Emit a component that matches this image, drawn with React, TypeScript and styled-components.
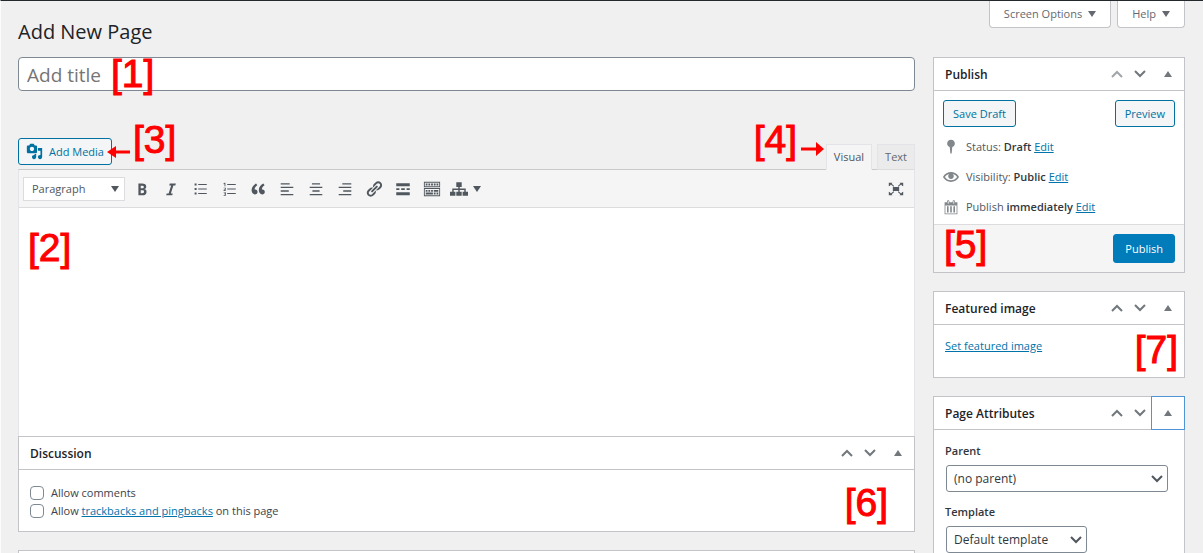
import React from "react";
import styled, { createGlobalStyle, css } from "styled-components";

const Global = createGlobalStyle`
  *, *::before, *::after { box-sizing: border-box; }
  html { height: 100%; overflow: hidden; }
  body {
    margin: 0;
    background: #f0f0f0;
    color: #3c434a;
    font-family: "Open Sans", "Noto Sans", sans-serif;
    font-size: 11px;
    line-height: 18px;
  }
  button, input, select, textarea { font: inherit; color: inherit; margin: 0; }
  a { color: #0073aa; }
`;

const Page = styled.main`
  display: flex;
  gap: 18px;
  min-height: 100vh;
  padding: 0 18px 0 17px;
  border-top: 1px solid #23282d;
  border-left: 1px solid #fcfcfc;
`;
const MainColumn = styled.div`
  flex: 1;
  min-width: 0;
  display: flex;
  flex-direction: column;
`;
const SideColumn = styled.aside`
  width: 252px;
  flex: none;
  display: flex;
  flex-direction: column;
  gap: 18px;
`;
const Heading = styled.h1`
  margin: 0;
  height: 56px;
  padding-top: 17px;
  font-size: 20px;
  line-height: 28px;
  font-weight: 400;
  color: #1d2327;
`;
const TitleWrap = styled.div`
  position: relative;
  display: flex;
`;
const TitleInput = styled.input`
  width: 100%;
  height: 34px;
  padding: 2px 8px 0;
  font-size: 19px;
  border: 1px solid #7e8993;
  border-radius: 4px;
  background: #fff;
  &::placeholder { color: #757575; opacity: 1; }
`;

const Mark = styled.span<{ $x: number; $y: number; $right?: boolean }>`
  position: absolute;
  top: ${(p) => p.$y}px;
  ${(p) => (p.$right ? css`right: ${p.$x}px;` : css`left: ${p.$x}px;`)}
  font-family: "Liberation Sans", Arial, sans-serif;
  font-size: 39px;
  line-height: 40px;
  color: #f00;
  -webkit-text-stroke: 1px #f00;
  white-space: nowrap;
  pointer-events: none;
`;
const Arrow = styled.svg<{ $x: number; $y: number; $right?: boolean }>`
  position: absolute;
  z-index: 2;
  top: ${(p) => p.$y}px;
  ${(p) => (p.$right ? css`right: ${p.$x}px;` : css`left: ${p.$x}px;`)}
  fill: #f00;
  pointer-events: none;
`;

const EditorHead = styled.div`
  position: relative;
  display: flex;
  justify-content: space-between;
  align-items: flex-end;
  margin-top: 47px;
  height: 31px;
`;
const Button = styled.button<{ $primary?: boolean }>`
  display: inline-flex;
  align-items: center;
  justify-content: center;
  height: ${(p) => (p.$primary ? 29 : 27)}px;
  padding: 0 ${(p) => (p.$primary ? 11 : 9)}px;
  border: 1px solid ${(p) => (p.$primary ? "#007cba" : "#0071a1")};
  border-radius: 3px;
  background: ${(p) => (p.$primary ? "#007cba" : "#f3f5f6")};
  color: ${(p) => (p.$primary ? "#fff" : "#0071a1")};
  white-space: nowrap;
`;
const MediaButton = styled(Button)`
  align-self: flex-start;
  gap: 6px;
  padding: 0 7px;
`;
const Tabs = styled.div`
  display: flex;
  gap: 5px;
  position: relative;
  z-index: 1;
`;
const Tab = styled.button<{ $active?: boolean }>`
  height: 26px;
  padding: 0 7px;
  border: 1px solid #e2e4e7;
  border-bottom-color: ${(p) => (p.$active ? "#f5f5f5" : "#dcdcde")};
  background: ${(p) => (p.$active ? "#f5f5f5" : "#ebebeb")};
  color: ${(p) => (p.$active ? "#50575e" : "#646970")};
  margin-bottom: -1px;
`;
const Editor = styled.section`
  position: relative;
  border: 1px solid #e2e4e7;
  border-top-color: #c8cacc;
  border-bottom: 0;
  background: #fff;
`;
const Toolbar = styled.div`
  display: flex;
  align-items: center;
  height: 38px;
  padding: 0 4px;
  background: #f5f5f5;
  border-bottom: 1px solid #dcdcde;
`;
const FormatButton = styled.button`
  display: flex;
  align-items: center;
  justify-content: space-between;
  width: 102px;
  height: 24px;
  margin-right: 2px;
  padding: 0 5px 0 8px;
  border: 1px solid #dcdcde;
  background: #fff;
  color: #50575e;
`;
const ToolButton = styled.button<{ $wide?: boolean; $end?: boolean }>`
  display: flex;
  align-items: center;
  justify-content: center;
  gap: 5px;
  width: ${(p) => (p.$wide ? 38 : 29)}px;
  height: 28px;
  padding: 0;
  border: 0;
  background: none;
  color: #50575e;
  margin-left: ${(p) => (p.$end ? "auto" : "0")};
`;
const Content = styled.textarea`
  display: block;
  width: 100%;
  height: 228px;
  padding: 8px;
  border: 0;
  resize: none;
  background: #fff;
`;

const Box = styled.section`
  position: relative;
  background: #fff;
  border: 1px solid #c3c4c7;
`;
const BoxHead = styled.header`
  display: flex;
  align-items: center;
  height: 33px;
  padding-left: 11px;
  border-bottom: 1px solid #c3c4c7;
`;
const BoxTitle = styled.h2`
  flex: 1;
  margin: 0;
  padding-top: 2px;
  font-size: 12px;
  font-weight: 600;
  color: #1d2327;
`;
const HeadButton = styled.button<{ $toggle?: boolean; $focus?: boolean; $dim?: boolean }>`
  display: flex;
  align-items: center;
  justify-content: center;
  width: ${(p) => (p.$toggle ? 34 : 23)}px;
  height: 34px;
  margin-right: ${(p) => (p.$toggle ? -1 : 0)}px;
  padding: 0;
  border: 1px solid ${(p) => (p.$focus ? "#4f94d4" : "transparent")};
  background: none;
  color: ${(p) => (p.$dim ? "#a0a5aa" : "#72777c")};
`;

const ScreenTabs = styled.div`
  display: flex;
  justify-content: flex-end;
  gap: 6px;
  height: 38px;
`;
const ScreenTab = styled.button`
  display: flex;
  flex: none;
  align-items: center;
  gap: 6px;
  height: 27px;
  padding: 0 14px;
  border: 1px solid #c3c4c7;
  border-top: 0;
  border-radius: 0 0 4px 4px;
  background: #fff;
  color: #646970;
  white-space: nowrap;
`;

const Actions = styled.div`
  display: flex;
  justify-content: space-between;
  padding: 9px;
`;
const InfoList = styled.ul`
  list-style: none;
  margin: 0;
  padding: 2px 9px 8px;
  display: flex;
  flex-direction: column;
  gap: 12px;
`;
const InfoRow = styled.li`
  display: flex;
  align-items: center;
  gap: 7px;
  color: #50575e;
  height: 18px;
  svg { color: #82878c; flex: none; }
  b { font-weight: 600; color: #32373c; }
`;
const Footer = styled.footer`
  display: flex;
  justify-content: flex-end;
  padding: 9px;
  background: #f5f5f5;
  border-top: 1px solid #dcdcde;
`;
const FeatureBody = styled.div`
  padding: 12px 11px 22px;
`;
const Fields = styled.div`
  display: flex;
  flex-direction: column;
  align-items: flex-start;
  padding: 12px 11px;
`;
const Label = styled.label`
  color: #32373c;
  font-weight: 600;
`;
const SelectWrap = styled.div<{ $w: string }>`
  position: relative;
  width: ${(p) => p.$w};
  margin: 5px 0 11px 1px;
  svg { position: absolute; right: 5px; top: 9px; color: #50575e; pointer-events: none; }
`;
const Select = styled.select`
  appearance: none;
  width: 100%;
  height: 27px;
  padding: 1px 24px 0 7px;
  border: 1px solid #7e8993;
  border-radius: 3px;
  background: #fff;
  color: #32373c;
  font-size: 12px;
`;
const Checks = styled.div`
  display: flex;
  flex-direction: column;
  padding: 14px 11px 11px;
`;
const CheckLabel = styled.label`
  display: flex;
  align-items: center;
  gap: 7px;
  height: 18px;
`;
const Check = styled.input`
  appearance: none;
  width: 14px;
  height: 14px;
  border: 1px solid #7e8993;
  border-radius: 4px;
  background: #fff;
`;
const NextBox = styled(Box)`
  margin-top: 18px;
  height: 40px;
`;

const Icon = ({ d, size = 18 }: { d: string; size?: number }) => (
  <svg width={size} height={size} viewBox="0 0 20 20" fill="currentColor" aria-hidden="true">
    <path d={d} />
  </svg>
);
const Caret = ({ up }: { up?: boolean }) => (
  <svg width={8} height={6} viewBox="0 0 8 6" fill="currentColor" aria-hidden="true">
    <path d={up ? "M0 6h8L4 0z" : "M0 0h8L4 6z"} />
  </svg>
);
const Chevron = ({ up }: { up?: boolean }) => (
  <svg width="12" height="10" viewBox="0 0 12 10" fill="none" stroke="currentColor" strokeWidth="2" aria-hidden="true">
    <path d={up ? "M1 8l5-5 5 5" : "M1 2l5 5 5-5"} />
  </svg>
);

const tools: [string, string][] = [
  ["Bold", "M6 4v13h4.54c1.37 0 2.46-.33 3.26-1 .8-.66 1.2-1.58 1.2-2.77 0-.84-.17-1.51-.51-2.01s-.9-.85-1.67-1.03v-.09c.57-.1 1.02-.4 1.36-.9s.51-1.13.51-1.91c0-1.14-.39-1.98-1.17-2.5C12.75 4.26 11.5 4 9.78 4H6zm2.57 5.15V6.26h1.36c.73 0 1.27.11 1.61.32.34.22.51.58.51 1.07 0 .54-.16.92-.47 1.15s-.82.35-1.51.35h-1.5zm0 2.19h1.6c1.44 0 2.16.53 2.16 1.61 0 .6-.17 1.05-.51 1.34s-.86.43-1.57.43H8.57v-3.38z"],
  ["Italic", "M14.78 6h-2.130l-2.800 9h2.120l-.620 2H4.600l.620-2h2.140l2.800-9H8.030l.620-2h6.750z"],
  ["Bulleted list", "M4 4h2.200v2.200H4zM4 9h2.200v2.200H4zM4 14h2.200v2.200H4zM8 4.500h9.500v1.100H8zM8 9.500h9.500v1.100H8zM8 14.500h9.500v1.100H8z"],
  ["Numbered list", "M8 4.500h9.500v1.100H8zM8 9.500h9.500v1.100H8zM8 14.500h9.500v1.100H8zM4 3.600L5.200 3H6v4H5V4.300l-1 .4zM4 8.500h2.500v2L5 11.400h1.500v.8H4v-1.200l1.600-1.100v-.600H4zM4 13.500h2.500v4H4v-.8h1.600v-.9H4.500v-.7h1.100v-.8H4z"],
  ["Blockquote", "M9.49 13.22c0-.74-.2-1.38-.61-1.9-.62-.78-1.83-.88-2.53-.72-.29-1.65 1.11-3.75 2.92-4.65L7.88 4c-2.73 1.3-5.42 4.28-4.96 8.05C3.21 14.43 4.59 16 6.54 16c.85 0 1.56-.25 2.12-.75s.83-1.18.83-2.03zm8.05 0c0-.74-.2-1.38-.61-1.9-.63-.78-1.83-.88-2.53-.72-.29-1.65 1.11-3.75 2.92-4.65L15.93 4c-2.73 1.3-5.41 4.28-4.95 8.05.29 2.38 1.66 3.95 3.61 3.95.85 0 1.56-.25 2.12-.75s.83-1.18.83-2.03z"],
  ["Align left", "M3 3.500h10V5H3zM3 7.500h14V9H3zM3 11.500h9V13H3zM3 15.500h14V17H3z"],
  ["Align center", "M5.500 3.500h9V5h-9zM3 7.500h14V9H3zM6 11.500h8V13H6zM3 15.500h14V17H3z"],
  ["Align right", "M7 3.500h10V5H7zM3 7.500h14V9H3zM8 11.500h9V13H8zM3 15.500h14V17H3z"],
  ["Insert link", "M17.74 2.76c1.68 1.69 1.68 4.41 0 6.1l-1.53 1.52c-1.12 1.12-2.7 1.47-4.14 1.09l2.62-2.61.76-.77.76-.76c.84-.84.84-2.2 0-3.04-.84-.85-2.2-.85-3.04 0l-.77.76-3.38 3.38c-.37-1.44-.02-3.02 1.1-4.14l1.52-1.53c1.69-1.68 4.42-1.68 6.1 0zM8.59 13.43l5.34-5.34c.42-.42.42-1.1 0-1.52-.44-.43-1.13-.39-1.53 0l-5.33 5.34c-.42.42-.42 1.1 0 1.52.44.43 1.13.39 1.52 0zm-.76 2.29l4.14-4.15c.38 1.44.03 3.02-1.09 4.14l-1.52 1.53c-1.69 1.68-4.41 1.68-6.1 0-1.68-1.68-1.68-4.42 0-6.1l1.53-1.52c1.12-1.12 2.7-1.47 4.14-1.1l-4.14 4.15c-.85.84-.85 2.2 0 3.05.84.84 2.2.84 3.04 0z"],
  ["Read more", "M17.500 7V3.500H2.500V7h15zM6 11V9.300H2.500V11H6zm6 0V9.300H8V11h4zm5.500 0V9.300H14V11h3.500zm0 6v-3.500H2.500V17h15z"],
  ["Toolbar toggle", "M19 2v6H1V2h18zm-1 5V3H2v4h16zM5 4v2H3V4h2zm3 0v2H6V4h2zm3 0v2H9V4h2zm3 0v2h-2V4h2zm3 0v2h-2V4h2zm2 5v9H1V9h18zm-1 8v-7H2v7h16zM5 11v2H3v-2h2zm3 0v2H6v-2h2zm3 0v2H9v-2h2zm6 0v2h-5v-2h5zm-6 3v2H3v-2h8zm3 0v2h-2v-2h2zm3 0v2h-2v-2h2z"],
];
const sitemap = "M7 2.500h6v5.300h-2.200v1.700H17.500V13H20v4.500h-6V13h1.900v-1.900h-5.100V13H13v4.500H7V13h2.200v-1.900H4.100V13H6v4.500H0V13h2.500V9.500h6.700V7.800H7z";
const fullscreen = "M2 3h4L5.200 4.100 8 6.600 7.300 7.400 4.300 5 3.200 6.500 2 7zM18 3h-4l.8 1.100L12 6.600l.7.800 3-2.400 1.100 1.500L18 7zM2 17h4l-.8-1.100L8 13.400l-.7-.8-3 2.400-1.100-1.500L2 13zM18 17h-4l.8-1.100-2.800-2.500.7-.8 3 2.400 1.100-1.500L18 13zM6.500 7.800h7v4.500h-7z";
const media = "M13 11V4c0-.55-.45-1-1-1h-1.670L9 1H5L3.670 3H2c-.55 0-1 .45-1 1v7c0 .55.45 1 1 1h10c.55 0 1-.45 1-1zM7 4.500c1.380 0 2.500 1.120 2.500 2.500S8.380 9.500 7 9.500 4.500 8.380 4.500 7 5.620 4.500 7 4.500zM14 6h5v10.500c0 1.380-1.120 2.500-2.500 2.500S14 17.880 14 16.500s1.120-2.500 2.500-2.500c.17 0 .34.02.5.050V9h-3V6zm-4 8.050V13h2v3.500c0 1.380-1.120 2.500-2.500 2.500S7 17.880 7 16.500 8.120 14 9.500 14c.17 0 .34.02.5.050z";
const pin = "M10 1c2.700 0 4.800 2 4.800 4.600 0 2-1.300 3.700-3.200 4.300L10.800 18H9.200l-.8-8.100C6.500 9.300 5.200 7.600 5.200 5.600 5.200 3 7.300 1 10 1z";
const eye = "M19.700 9.400C17.700 6 14 3.900 10 3.900S2.300 6 .3 9.400L0 10l.3.600c2 3.400 5.700 5.500 9.700 5.500s7.700-2.100 9.700-5.500l.3-.6-.3-.6zM10 14.100c-3.100 0-6-1.600-7.700-4.100C3.600 8 5.700 6.600 8 6.100c-.9.600-1.500 1.700-1.500 2.900 0 1.900 1.600 3.500 3.500 3.500s3.500-1.600 3.500-3.500c0-1.200-.6-2.300-1.500-2.900 2.300.5 4.400 1.900 5.700 3.900-1.700 2.500-4.600 4.100-7.700 4.100z";
const calendar = "M15 4h3v15H2V4h3V3c0-.83.67-1.500 1.500-1.500S8 2.170 8 3v1h4V3c0-.83.67-1.500 1.500-1.500S15 2.170 15 3v1zM6 3v2.500c0 .28.22.5.5.5s.5-.22.5-.5V3c0-.28-.22-.5-.5-.5S6 2.720 6 3zm7 0v2.500c0 .28.22.5.5.5s.5-.22.5-.5V3c0-.28-.22-.5-.5-.5s-.5.220-.5.500zm4 15V8H3v10h14zM5 9h2v8H5zM9 9h2v8H9zM13 9h2v8h-2z";

const Head = ({ title, firstDim, focus }: { title: string; firstDim?: boolean; focus?: boolean }) => (
  <BoxHead>
    <BoxTitle>{title}</BoxTitle>
    <HeadButton $dim={firstDim} aria-label={`Move ${title} up`}><Chevron up /></HeadButton>
    <HeadButton aria-label={`Move ${title} down`}><Chevron /></HeadButton>
    <HeadButton $toggle $focus={focus} aria-label={`Toggle ${title}`}><Caret up /></HeadButton>
  </BoxHead>
);

export default function App() {
  return (
    <>
      <Global />
      <Page>
        <MainColumn>
          <Heading>Add New Page</Heading>
          <TitleWrap>
            <TitleInput placeholder="Add title" aria-label="Add title" />
            <Mark $x={93} $y={-3}>[1]</Mark>
          </TitleWrap>
          <EditorHead>
            <MediaButton><Icon d={media} size={17} />Add Media</MediaButton>
            <Arrow $x={89} $y={8} width="23" height="12" viewBox="0 0 23 12"><path d="M0 6l9-6v4.500h14v3H9V12z" /></Arrow>
            <Mark $x={115} $y={-18}>[3]</Mark>
            <Mark $right $x={118} $y={-18}>[4]</Mark>
            <Arrow $right $x={91} $y={4} width="23" height="14" viewBox="0 0 23 14"><path d="M23 7l-8-7v5.500H0v3h15V14z" /></Arrow>
            <Tabs>
              <Tab $active>Visual</Tab>
              <Tab>Text</Tab>
            </Tabs>
          </EditorHead>
          <Editor>
            <Toolbar>
              <FormatButton>Paragraph <Caret /></FormatButton>
              {tools.map(([name, d]) => (
                <ToolButton key={name} aria-label={name}><Icon d={d} /></ToolButton>
              ))}
              <ToolButton $wide aria-label="Page layout"><Icon d={sitemap} /><Caret /></ToolButton>
              <ToolButton $end aria-label="Fullscreen"><Icon d={fullscreen} /></ToolButton>
            </Toolbar>
            <Content aria-label="Page content" />
            <Mark $x={9} $y={58}>[2]</Mark>
          </Editor>
          <Box>
            <Head title="Discussion" />
            <Checks>
              <CheckLabel><Check type="checkbox" />Allow comments</CheckLabel>
              <CheckLabel><Check type="checkbox" /><span>Allow <a href="#trackbacks">trackbacks and pingbacks</a> on this page</span></CheckLabel>
            </Checks>
            <Mark $right $x={26} $y={46}>[6]</Mark>
          </Box>
          <NextBox />
        </MainColumn>
        <SideColumn>
          <ScreenTabs>
            <ScreenTab>Screen Options <Caret /></ScreenTab>
            <ScreenTab>Help <Caret /></ScreenTab>
          </ScreenTabs>
          <Box>
            <Head title="Publish" firstDim />
            <Actions>
              <Button>Save Draft</Button>
              <Button>Preview</Button>
            </Actions>
            <InfoList>
              <InfoRow><Icon d={pin} size={16} /><span>Status: <b>Draft</b> <a href="#status">Edit</a></span></InfoRow>
              <InfoRow><Icon d={eye} size={16} /><span>Visibility: <b>Public</b> <a href="#visibility">Edit</a></span></InfoRow>
              <InfoRow><Icon d={calendar} size={16} /><span>Publish <b>immediately</b> <a href="#schedule">Edit</a></span></InfoRow>
            </InfoList>
            <Footer><Button $primary>Publish</Button></Footer>
            <Mark $x={10} $y={167}>[5]</Mark>
          </Box>
          <Box>
            <Head title="Featured image" />
            <FeatureBody><a href="#featured">Set featured image</a></FeatureBody>
            <Mark $right $x={6} $y={38}>[7]</Mark>
          </Box>
          <Box>
            <Head title="Page Attributes" focus />
            <Fields>
              <Label htmlFor="parent">Parent</Label>
              <SelectWrap $w="222px">
                <Select id="parent"><option>(no parent)</option></Select>
                <Chevron />
              </SelectWrap>
              <Label htmlFor="template">Template</Label>
              <SelectWrap $w="141px">
                <Select id="template"><option>Default template</option></Select>
                <Chevron />
              </SelectWrap>
            </Fields>
          </Box>
        </SideColumn>
      </Page>
    </>
  );
}
